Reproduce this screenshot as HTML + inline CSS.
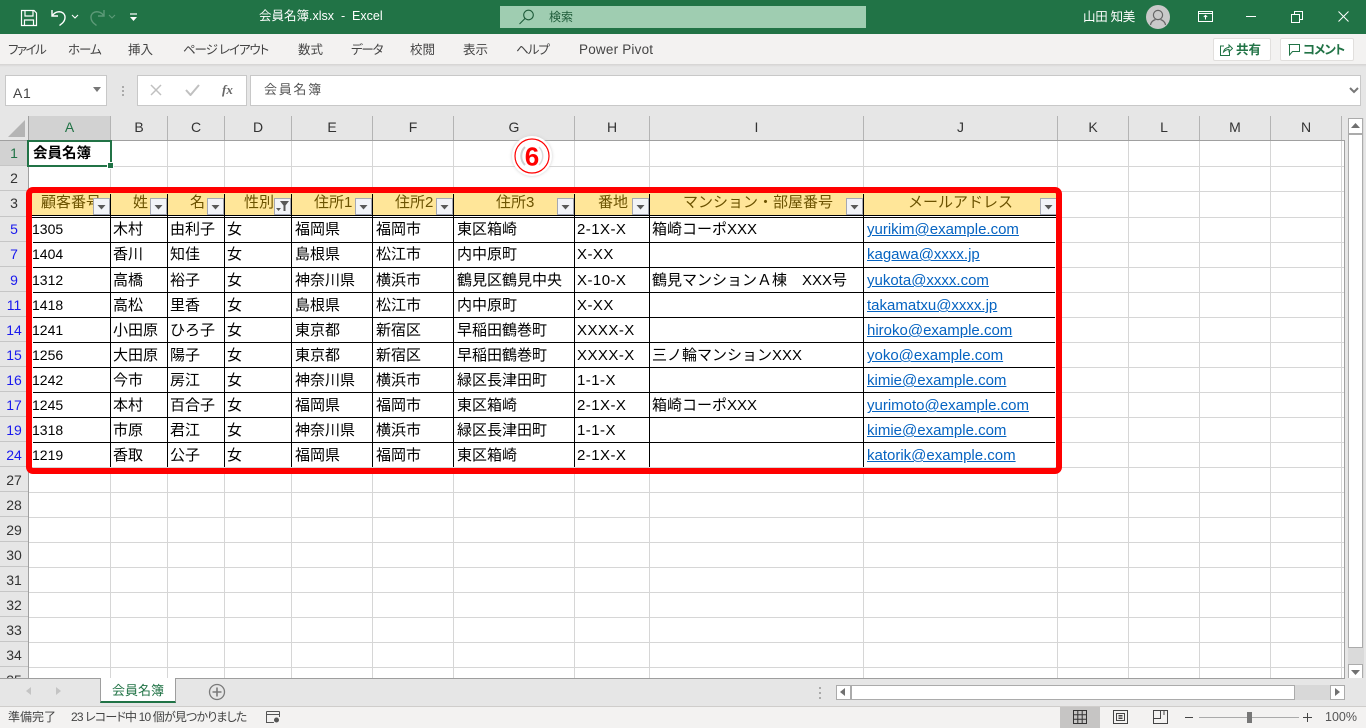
<!DOCTYPE html>
<html lang="ja"><head><meta charset="utf-8"><title>会員名簿.xlsx - Excel</title>
<style>
html,body{margin:0;padding:0;width:1366px;height:728px;overflow:hidden;background:#fff}
body{position:relative;font-family:"Liberation Sans","Noto Sans CJK JP",sans-serif;color:#000}
div,span,i,a,svg{position:absolute;display:block;font-style:normal;white-space:pre}
.box{box-sizing:border-box}
.t{font-size:12.5px;line-height:18px;color:#444;font-feature-settings:"palt"}
.ch{top:115px;height:25px;line-height:25px;text-align:center;font-size:14px;color:#333}
.cs{top:116px;width:1px;height:24px;background:#b4b4b4}
.rh{left:0;width:28px;height:25px;line-height:25px;text-align:center;font-size:14px;color:#333}
.rb{color:#1a1aee}
.rl{left:0;width:28px;height:1px;background:#c6c6c6}
.gv{top:141px;width:1px;height:537px;background:#d6d6d6}
.gh{left:29px;width:1315px;height:1px;background:#d6d6d6}
.bv{top:194px;width:1px;height:273px;background:#000}
.bh{left:33px;width:1022px;height:1px;background:#000}
.r{left:0;width:1100px;height:25px;line-height:25px;font-size:15px}
.r i{top:0}
.c1{left:32px;font-size:14px}.c2{left:113px}.c3{left:170px}.c4{left:227px}.c5{left:295px}.c6{left:376px}.c7{left:457px}.c8{left:577px;letter-spacing:.45px}.c9{left:652px}
.r a{left:867px;top:0;color:#0563c1;text-decoration:underline}
.h{top:191px;height:24px;line-height:24px;font-size:15px;color:#6b5200}
.f{top:198px;width:17px;height:17px}
</style></head><body>

<!-- title bar -->
<div style="left:0;top:0;width:1366px;height:34px;background:#217346"></div>
<svg style="left:20px;top:9px" width="18" height="18" viewBox="0 0 18 18" fill="none" stroke="#fff" stroke-width="1.2"><path d="M1.5 1.5H14L16.5 4V16.5H1.5Z"/><path d="M5 1.5V7H13V1.5M4.5 16.5V11H13.5V16.5"/></svg>
<svg style="left:50px;top:8px" width="18" height="19" viewBox="0 0 18 19" fill="none" stroke="#fff" stroke-width="1.4"><path d="M2 2V8H8"/><path d="M2.5 7.5C5 3.5 10 2.8 13 5C16 7.5 15.5 12 12.5 15L9.5 17.5"/></svg>
<svg style="left:71px;top:14px" width="8" height="5" viewBox="0 0 8 5" fill="none" stroke="#fff" stroke-width="1.1"><path d="M1 1L4 4L7 1"/></svg>
<svg style="left:88px;top:8px" width="18" height="19" viewBox="0 0 18 19" fill="none" stroke="#5d9a78" stroke-width="1.4"><path d="M16 2V8H10"/><path d="M15.5 7.5C13 3.5 8 2.8 5 5C2 7.5 2.5 12 5.5 15L8.5 17.5"/></svg>
<svg style="left:108px;top:14px" width="8" height="5" viewBox="0 0 8 5" fill="none" stroke="#5d9a78" stroke-width="1.1"><path d="M1 1L4 4L7 1"/></svg>
<svg style="left:129px;top:13px" width="9" height="9" viewBox="0 0 9 9"><path d="M1 1H8" stroke="#fff" stroke-width="1.2"/><path d="M1 4L4.5 8L8 4Z" fill="#fff"/></svg>
<span style="left:259px;top:7px;font-size:12.5px;line-height:18px;color:#fff">会員名簿.xlsx&nbsp; -&nbsp; Excel</span>
<div style="left:500px;top:6px;width:366px;height:22px;background:#9fcdb1"></div>
<svg style="left:518px;top:9px" width="17" height="16" viewBox="0 0 17 16" fill="none" stroke="#1f5c3a" stroke-width="1.1"><circle cx="10.5" cy="6" r="4.8"/><path d="M7 9.5L1.5 15"/></svg>
<span style="left:549px;top:8px;font-size:12px;line-height:18px;color:#1f5c3a">検索</span>
<span style="left:1083px;top:8px;font-size:12.5px;line-height:18px;color:#fff;letter-spacing:-.3px">山田 知美</span>
<div style="left:1146px;top:5px;width:24px;height:24px;border-radius:50%;background:#c9c9c9"></div>
<svg style="left:1146px;top:5px" width="24" height="24" viewBox="0 0 24 24" fill="none" stroke="#666" stroke-width="1.2"><circle cx="12" cy="10" r="4.6"/><path d="M4.5 20C5 16.5 8 15 9.5 14.5M19.5 20C19 16.5 16 15 14.5 14.5"/></svg>
<svg style="left:1198px;top:10px" width="15" height="13" viewBox="0 0 15 13" fill="none" stroke="#fff"><path d="M.5 1.5H14.5V11.5H.5ZM.5 3.5H14.5"/><path d="M7.5 9.5V5.5M5.8 7L7.5 5.3L9.2 7"/></svg>
<div style="left:1246px;top:16px;width:10px;height:1px;background:#fff"></div>
<svg style="left:1291px;top:11px" width="12" height="12" viewBox="0 0 12 12" fill="none" stroke="#fff"><path d="M.5 3.5H8.5V11.5H.5ZM3.5 3.5V.5H11.5V8.5H8.5"/></svg>
<svg style="left:1338px;top:11px" width="11" height="11" viewBox="0 0 11 11" fill="none" stroke="#fff"><path d="M.5.5L10.5 10.5M10.5.5L.5 10.5"/></svg>

<!-- ribbon tabs -->
<div style="left:0;top:34px;width:1366px;height:30px;background:#f3f2f1"></div>
<div style="left:0;top:64px;width:1366px;height:51px;background:#e6e6e6"></div>
<div style="left:0;top:64px;width:1366px;height:3px;background:linear-gradient(#d4d3d2,#e6e6e6)"></div>
<span class="t" style="left:8px;top:41px;letter-spacing:-1.5px">ファイル</span>
<span class="t" style="left:68px;top:41px;letter-spacing:-1px">ホーム</span>
<span class="t" style="left:128px;top:41px">挿入</span>
<span class="t" style="left:183px;top:41px;letter-spacing:-1.1px">ページ レイアウト</span>
<span class="t" style="left:298px;top:41px">数式</span>
<span class="t" style="left:351px;top:41px;letter-spacing:-1.2px">データ</span>
<span class="t" style="left:410px;top:41px">校閲</span>
<span class="t" style="left:463px;top:41px">表示</span>
<span class="t" style="left:516px;top:41px;letter-spacing:-1px">ヘルプ</span>
<span class="t" style="left:579px;top:41px;font-size:13.5px;letter-spacing:.2px">Power Pivot</span>
<div class="box" style="left:1213px;top:38px;width:58px;height:23px;background:#fff;border:1px solid #e1dfdd;border-radius:2px"></div>
<svg style="left:1219px;top:42px" width="14" height="15" viewBox="0 0 14 15" fill="none" stroke="#217346"><path d="M5 4H1.5V13.5H10.5V9"/><path d="M4.5 10C5 7 7.5 5.5 10 5.5V3L13.5 6.5L10 9.5V7.5C8 7.5 6 8.5 4.5 10Z"/></svg>
<span style="left:1236px;top:41px;font-size:12.5px;line-height:18px;font-weight:bold;color:#217346">共有</span>
<div class="box" style="left:1280px;top:38px;width:74px;height:23px;background:#fff;border:1px solid #e1dfdd;border-radius:2px"></div>
<svg style="left:1288px;top:44px" width="12" height="12" viewBox="0 0 12 12" fill="none" stroke="#217346"><path d="M.5.5H11.5V7.5H4.5L1.5 11V.5"/></svg>
<span style="left:1303px;top:41px;font-size:12.5px;line-height:18px;font-weight:bold;color:#217346;font-feature-settings:'palt';letter-spacing:-1px">コメント</span>

<!-- formula bar -->
<div class="box" style="left:5px;top:75px;width:102px;height:31px;background:#fff;border:1px solid #c8c8c8"></div>
<span style="left:13px;top:84px;font-size:14px;line-height:18px;color:#444;letter-spacing:.6px">A1</span>
<svg style="left:92px;top:87px" width="10" height="6"><path d="M1 0H9L5 5Z" fill="#777"/></svg>
<div style="left:122px;top:86px;width:2px;height:2px;background:#aaa"></div>
<div style="left:122px;top:90px;width:2px;height:2px;background:#aaa"></div>
<div style="left:122px;top:94px;width:2px;height:2px;background:#aaa"></div>
<div class="box" style="left:137px;top:75px;width:110px;height:31px;background:#fff;border:1px solid #c8c8c8"></div>
<svg style="left:150px;top:84px" width="12" height="12" fill="none" stroke="#c0c0c0" stroke-width="1.5"><path d="M1 1L11 11M11 1L1 11"/></svg>
<svg style="left:185px;top:84px" width="15" height="12" fill="none" stroke="#c0c0c0" stroke-width="2"><path d="M1 6L5.5 11L14 1"/></svg>
<span style="left:222px;top:81px;font-family:'Liberation Serif',serif;font-style:italic;font-weight:bold;font-size:13px;line-height:18px;color:#666">fx</span>
<div class="box" style="left:250px;top:75px;width:1111px;height:31px;background:#fff;border:1px solid #c8c8c8"></div>
<span style="left:264px;top:80px;font-size:13px;line-height:20px;color:#555;letter-spacing:1.7px">会員名簿</span>
<svg style="left:1349px;top:87px" width="10" height="7" fill="none" stroke="#777" stroke-width="2"><path d="M1 1L5 5L9 1"/></svg>

<!-- headers background -->
<div style="left:0;top:115px;width:1345px;height:26px;background:#e6e6e6"></div>
<div style="left:0;top:141px;width:28px;height:537px;background:#e6e6e6"></div>
<div style="left:28px;top:116px;width:83px;height:24px;background:#d2d2d2"></div>
<div style="left:0;top:141px;width:28px;height:25px;background:#d2d2d2"></div>
<svg style="left:8px;top:120px" width="18" height="18"><path d="M17 0V17H0Z" fill="#b4b4b4"/></svg>
<div style="left:0;top:140px;width:1345px;height:1px;background:#a0a0a0"></div>
<div style="left:28px;top:116px;width:1px;height:562px;background:#a0a0a0"></div>

<div class="cs" style="left:110px"></div><div class="cs" style="left:167px"></div><div class="cs" style="left:224px"></div><div class="cs" style="left:291px"></div><div class="cs" style="left:372px"></div><div class="cs" style="left:453px"></div><div class="cs" style="left:574px"></div><div class="cs" style="left:649px"></div><div class="cs" style="left:863px"></div><div class="cs" style="left:1057px"></div><div class="cs" style="left:1128px"></div><div class="cs" style="left:1199px"></div><div class="cs" style="left:1270px"></div><div class="cs" style="left:1341px"></div>

<div class="ch" style="left:29px;width:81px;color:#217346">A</div>
<div class="ch" style="left:111px;width:56px">B</div>
<div class="ch" style="left:168px;width:56px">C</div>
<div class="ch" style="left:225px;width:66px">D</div>
<div class="ch" style="left:292px;width:80px">E</div>
<div class="ch" style="left:373px;width:80px">F</div>
<div class="ch" style="left:454px;width:120px">G</div>
<div class="ch" style="left:575px;width:74px">H</div>
<div class="ch" style="left:650px;width:213px">I</div>
<div class="ch" style="left:864px;width:193px">J</div>
<div class="ch" style="left:1058px;width:70px">K</div>
<div class="ch" style="left:1129px;width:70px">L</div>
<div class="ch" style="left:1200px;width:70px">M</div>
<div class="ch" style="left:1271px;width:70px">N</div>

<!-- row header separators -->
<div class="rl" style="top:165px"></div><div class="rl" style="top:190px"></div><div class="rl" style="top:216px"></div><div class="rl" style="top:241px"></div><div class="rl" style="top:266px"></div><div class="rl" style="top:291px"></div><div class="rl" style="top:316px"></div><div class="rl" style="top:341px"></div><div class="rl" style="top:366px"></div><div class="rl" style="top:391px"></div><div class="rl" style="top:416px"></div><div class="rl" style="top:441px"></div><div class="rl" style="top:466px"></div><div class="rl" style="top:491px"></div><div class="rl" style="top:516px"></div><div class="rl" style="top:541px"></div><div class="rl" style="top:566px"></div><div class="rl" style="top:591px"></div><div class="rl" style="top:616px"></div><div class="rl" style="top:641px"></div><div class="rl" style="top:666px"></div>

<div class="rh" style="top:141px;color:#217346">1</div>
<div class="rh" style="top:166px">2</div>
<div class="rh" style="top:191px">3</div>
<div class="rh rb" style="top:217px">5</div>
<div class="rh rb" style="top:242px">7</div>
<div class="rh rb" style="top:268px">9</div>
<div class="rh rb" style="top:293px">11</div>
<div class="rh rb" style="top:318px">14</div>
<div class="rh rb" style="top:343px">15</div>
<div class="rh rb" style="top:368px">16</div>
<div class="rh rb" style="top:393px">17</div>
<div class="rh rb" style="top:418px">19</div>
<div class="rh rb" style="top:443px">24</div>
<div class="rh" style="top:468px">27</div>
<div class="rh" style="top:493px">28</div>
<div class="rh" style="top:518px">29</div>
<div class="rh" style="top:543px">30</div>
<div class="rh" style="top:568px">31</div>
<div class="rh" style="top:593px">32</div>
<div class="rh" style="top:618px">33</div>
<div class="rh" style="top:643px">34</div>
<div class="rh" style="top:668px;height:10px;overflow:hidden">35</div>

<!-- gridlines -->
<div class="gv" style="left:110px"></div><div class="gv" style="left:167px"></div><div class="gv" style="left:224px"></div><div class="gv" style="left:291px"></div><div class="gv" style="left:372px"></div><div class="gv" style="left:453px"></div><div class="gv" style="left:574px"></div><div class="gv" style="left:649px"></div><div class="gv" style="left:863px"></div><div class="gv" style="left:1057px"></div><div class="gv" style="left:1128px"></div><div class="gv" style="left:1199px"></div><div class="gv" style="left:1270px"></div><div class="gv" style="left:1341px"></div>
<div class="gh" style="top:166px"></div><div class="gh" style="top:191px"></div><div class="gh" style="top:217px"></div><div class="gh" style="top:242px"></div><div class="gh" style="top:267px"></div><div class="gh" style="top:292px"></div><div class="gh" style="top:317px"></div><div class="gh" style="top:342px"></div><div class="gh" style="top:367px"></div><div class="gh" style="top:392px"></div><div class="gh" style="top:417px"></div><div class="gh" style="top:442px"></div><div class="gh" style="top:467px"></div><div class="gh" style="top:492px"></div><div class="gh" style="top:517px"></div><div class="gh" style="top:542px"></div><div class="gh" style="top:567px"></div><div class="gh" style="top:592px"></div><div class="gh" style="top:617px"></div><div class="gh" style="top:642px"></div><div class="gh" style="top:667px"></div>
<div style="left:1344px;top:141px;width:1px;height:537px;background:#a0a0a0"></div>

<!-- table -->
<div style="left:29px;top:191px;width:1027px;height:24px;background:#ffe699"></div>
<div style="left:29px;top:216px;width:1027px;height:251px;background:#fff"></div>
<div style="left:29px;top:215px;width:1027px;height:1px;background:#000"></div>
<div style="left:29px;top:217px;width:1027px;height:1px;background:#000"></div>
<div class="bh" style="top:242px"></div><div class="bh" style="top:267px"></div><div class="bh" style="top:292px"></div><div class="bh" style="top:317px"></div><div class="bh" style="top:342px"></div><div class="bh" style="top:367px"></div><div class="bh" style="top:392px"></div><div class="bh" style="top:417px"></div><div class="bh" style="top:442px"></div>
<div class="bv" style="left:110px"></div><div class="bv" style="left:167px"></div><div class="bv" style="left:224px"></div><div class="bv" style="left:291px"></div><div class="bv" style="left:372px"></div><div class="bv" style="left:453px"></div><div class="bv" style="left:574px"></div><div class="bv" style="left:649px"></div><div class="bv" style="left:863px"></div>

<span class="h" style="left:41px">顧客番号</span>
<span class="h" style="left:133px">姓</span>
<span class="h" style="left:190px">名</span>
<span class="h" style="left:244px">性別</span>
<span class="h" style="left:314px">住所1</span>
<span class="h" style="left:395px">住所2</span>
<span class="h" style="left:496px">住所3</span>
<span class="h" style="left:598px">番地</span>
<span class="h" style="left:683px">マンション・部屋番号</span>
<span class="h" style="left:908px">メールアドレス</span>

<svg class="f" style="left:93px" viewBox="0 0 17 17"><rect x=".5" y=".5" width="16" height="16" fill="#f2f4f8" stroke="#a5a8b2"/><path d="M4.500 7H12.500L8.500 11.500Z" fill="#595959"/></svg>
<svg class="f" style="left:150px" viewBox="0 0 17 17"><rect x=".5" y=".5" width="16" height="16" fill="#f2f4f8" stroke="#a5a8b2"/><path d="M4.500 7H12.500L8.500 11.500Z" fill="#595959"/></svg>
<svg class="f" style="left:207px" viewBox="0 0 17 17"><rect x=".5" y=".5" width="16" height="16" fill="#f2f4f8" stroke="#a5a8b2"/><path d="M4.500 7H12.500L8.500 11.500Z" fill="#595959"/></svg>
<svg class="f" style="left:274px" viewBox="0 0 17 17"><rect x=".5" y=".5" width="16" height="16" fill="#f2f4f8" stroke="#a5a8b2"/><path d="M6 3H15L11.5 7.5V13H9.5V7.5Z" fill="#595959"/><path d="M2 10H7L4.5 13Z" fill="#595959"/></svg>
<svg class="f" style="left:355px" viewBox="0 0 17 17"><rect x=".5" y=".5" width="16" height="16" fill="#f2f4f8" stroke="#a5a8b2"/><path d="M4.500 7H12.500L8.500 11.500Z" fill="#595959"/></svg>
<svg class="f" style="left:436px" viewBox="0 0 17 17"><rect x=".5" y=".5" width="16" height="16" fill="#f2f4f8" stroke="#a5a8b2"/><path d="M4.500 7H12.500L8.500 11.500Z" fill="#595959"/></svg>
<svg class="f" style="left:557px" viewBox="0 0 17 17"><rect x=".5" y=".5" width="16" height="16" fill="#f2f4f8" stroke="#a5a8b2"/><path d="M4.500 7H12.500L8.500 11.500Z" fill="#595959"/></svg>
<svg class="f" style="left:632px" viewBox="0 0 17 17"><rect x=".5" y=".5" width="16" height="16" fill="#f2f4f8" stroke="#a5a8b2"/><path d="M4.500 7H12.500L8.500 11.500Z" fill="#595959"/></svg>
<svg class="f" style="left:846px" viewBox="0 0 17 17"><rect x=".5" y=".5" width="16" height="16" fill="#f2f4f8" stroke="#a5a8b2"/><path d="M4.500 7H12.500L8.500 11.500Z" fill="#595959"/></svg>
<svg class="f" style="left:1040px" viewBox="0 0 17 17"><rect x=".5" y=".5" width="16" height="16" fill="#f2f4f8" stroke="#a5a8b2"/><path d="M4.500 7H12.500L8.500 11.500Z" fill="#595959"/></svg>

<div class="r" style="top:217px"><i class="c1">1305</i><i class="c2">木村</i><i class="c3">由利子</i><i class="c4">女</i><i class="c5">福岡県</i><i class="c6">福岡市</i><i class="c7">東区箱崎</i><i class="c8">2-1X-X</i><i class="c9">箱崎コーポXXX</i><a>yurikim@example.com</a></div>
<div class="r" style="top:242px"><i class="c1">1404</i><i class="c2">香川</i><i class="c3">知佳</i><i class="c4">女</i><i class="c5">島根県</i><i class="c6">松江市</i><i class="c7">内中原町</i><i class="c8">X-XX</i><a>kagawa@xxxx.jp</a></div>
<div class="r" style="top:268px"><i class="c1">1312</i><i class="c2">高橋</i><i class="c3">裕子</i><i class="c4">女</i><i class="c5">神奈川県</i><i class="c6">横浜市</i><i class="c7">鶴見区鶴見中央</i><i class="c8">X-10-X</i><i class="c9">鶴見マンションＡ棟　XXX号</i><a>yukota@xxxx.com</a></div>
<div class="r" style="top:293px"><i class="c1">1418</i><i class="c2">高松</i><i class="c3">里香</i><i class="c4">女</i><i class="c5">島根県</i><i class="c6">松江市</i><i class="c7">内中原町</i><i class="c8">X-XX</i><a>takamatxu@xxxx.jp</a></div>
<div class="r" style="top:318px"><i class="c1">1241</i><i class="c2">小田原</i><i class="c3">ひろ子</i><i class="c4">女</i><i class="c5">東京都</i><i class="c6">新宿区</i><i class="c7">早稲田鶴巻町</i><i class="c8">XXXX-X</i><a>hiroko@example.com</a></div>
<div class="r" style="top:343px"><i class="c1">1256</i><i class="c2">大田原</i><i class="c3">陽子</i><i class="c4">女</i><i class="c5">東京都</i><i class="c6">新宿区</i><i class="c7">早稲田鶴巻町</i><i class="c8">XXXX-X</i><i class="c9">三ノ輪マンションXXX</i><a>yoko@example.com</a></div>
<div class="r" style="top:368px"><i class="c1">1242</i><i class="c2">今市</i><i class="c3">房江</i><i class="c4">女</i><i class="c5">神奈川県</i><i class="c6">横浜市</i><i class="c7">緑区長津田町</i><i class="c8">1-1-X</i><a>kimie@example.com</a></div>
<div class="r" style="top:393px"><i class="c1">1245</i><i class="c2">本村</i><i class="c3">百合子</i><i class="c4">女</i><i class="c5">福岡県</i><i class="c6">福岡市</i><i class="c7">東区箱崎</i><i class="c8">2-1X-X</i><i class="c9">箱崎コーポXXX</i><a>yurimoto@example.com</a></div>
<div class="r" style="top:418px"><i class="c1">1318</i><i class="c2">市原</i><i class="c3">君江</i><i class="c4">女</i><i class="c5">神奈川県</i><i class="c6">横浜市</i><i class="c7">緑区長津田町</i><i class="c8">1-1-X</i><a>kimie@example.com</a></div>
<div class="r" style="top:443px"><i class="c1">1219</i><i class="c2">香取</i><i class="c3">公子</i><i class="c4">女</i><i class="c5">福岡県</i><i class="c6">福岡市</i><i class="c7">東区箱崎</i><i class="c8">2-1X-X</i><a>katorik@example.com</a></div>

<!-- A1 -->
<span style="left:33px;top:142px;font-size:14.5px;line-height:24px;font-weight:bold">会員名簿</span>
<div class="box" style="left:27px;top:140px;width:85px;height:27px;border:2px solid #217346"></div>
<div class="box" style="left:108px;top:163px;width:5px;height:5px;background:#217346;outline:1px solid #fff"></div>

<!-- red frame -->
<div class="box" style="left:26px;top:187px;width:1036px;height:287px;border:6.5px solid #f00;border-radius:7px"></div>

<!-- callout -->
<svg style="left:508px;top:132px" width="48" height="48" viewBox="0 0 48 48" fill="none">
<circle cx="24" cy="24" r="20" fill="#fff" style="filter:drop-shadow(0 0 1.500px #cfcfcf)"/><circle cx="24" cy="24" r="17" stroke="#f00" stroke-width="1.2"/>
<path d="M17 15C12 20 12 28 17 33" stroke="#cfcfcf" stroke-width="2"/><path d="M31 15C36 20 36 28 31 33" stroke="#dcdcdc" stroke-width="1.5"/>
<text x="24" y="33.500" text-anchor="middle" font-family="Liberation Sans" font-size="26" font-weight="bold" fill="#f00">6</text></svg>

<!-- vertical scrollbar -->
<div style="left:1345px;top:115px;width:21px;height:563px;background:#e6e6e6"></div>
<div style="left:1348px;top:118px;width:16px;height:562px;background:#dadada"></div>
<div class="box" style="left:1348px;top:118px;width:15px;height:16px;background:#fff;border:1px solid #ababab"></div>
<svg style="left:1351px;top:123px" width="9" height="6"><path d="M4.500 0L9 5H0Z" fill="#707070"/></svg>
<div class="box" style="left:1348px;top:134px;width:15px;height:514px;background:#fff;border:1px solid #ababab"></div>
<div class="box" style="left:1348px;top:664px;width:15px;height:15px;background:#fff;border:1px solid #ababab"></div>
<svg style="left:1351px;top:670px" width="9" height="6"><path d="M0 0H9L4.500 5Z" fill="#707070"/></svg>

<!-- sheet tab bar -->
<div style="left:0;top:678px;width:1366px;height:29px;background:#e6e6e6"></div>
<div style="left:0;top:678px;width:1345px;height:1px;background:#9e9e9e"></div>
<svg style="left:26px;top:687px" width="6" height="9"><path d="M5 0V8L0 4Z" fill="#c4c4c4"/></svg>
<svg style="left:56px;top:687px" width="6" height="9"><path d="M0 0V8L5 4Z" fill="#c4c4c4"/></svg>
<div class="box" style="left:100px;top:678px;width:76px;height:25px;background:#fff;border:1px solid #9e9e9e;border-bottom:2px solid #217346"></div>
<div style="left:101px;top:678px;width:74px;height:1px;background:#fff"></div>
<span style="left:112px;top:682px;font-size:13px;line-height:18px;color:#217346">会員名簿</span>
<svg style="left:208px;top:683px" width="18" height="18" fill="none" stroke="#7a7a7a"><circle cx="9" cy="9" r="7.500" stroke-width="1.300"/><path d="M9 4.500V13.500M4.500 9H13.500" stroke-width="1.600"/></svg>
<div style="left:819px;top:687px;width:2px;height:2px;background:#aaa"></div><div style="left:819px;top:692px;width:2px;height:2px;background:#aaa"></div><div style="left:819px;top:697px;width:2px;height:2px;background:#aaa"></div>
<div style="left:836px;top:685px;width:509px;height:15px;background:#d8d8d8"></div>
<div class="box" style="left:836px;top:685px;width:15px;height:15px;background:#fff;border:1px solid #ababab"></div>
<svg style="left:840px;top:688px" width="6" height="9"><path d="M5 0V8L0 4Z" fill="#707070"/></svg>
<div class="box" style="left:851px;top:685px;width:444px;height:15px;background:#fff;border:1px solid #ababab"></div>
<div class="box" style="left:1330px;top:685px;width:15px;height:15px;background:#fff;border:1px solid #ababab"></div>
<svg style="left:1335px;top:688px" width="6" height="9"><path d="M0 0V8L5 4Z" fill="#707070"/></svg>

<!-- status bar -->
<div style="left:0;top:706px;width:1366px;height:22px;background:#f3f2f1"></div>
<div style="left:0;top:706px;width:1366px;height:1px;background:#cfcdcb"></div>
<span class="t" style="left:8px;top:708px;font-size:12px">準備完了</span>
<span class="t" style="left:71px;top:708px;font-size:12px;letter-spacing:-.85px">23 レコード中 10 個が見つかりました</span>
<svg style="left:266px;top:711px" width="15" height="13" fill="none" stroke="#555"><path d="M.5.500H13.500M.5 3.500H13.500M.5.500V11.500H8M13.500.500V6"/><circle cx="10.500" cy="9" r="3" fill="#555" stroke="#f3f2f1"/></svg>
<div style="left:1060px;top:707px;width:40px;height:21px;background:#c6c5c4"></div>
<svg style="left:1073px;top:710px" width="14" height="14" fill="none" stroke="#333"><path d="M.5.500H13.500V13.500H.5ZM4.800.500V13.500M9.200.500V13.500M.5 4.800H13.500M.5 9.200H13.500"/></svg>
<svg style="left:1113px;top:710px" width="15" height="14" fill="none" stroke="#444"><path d="M.5.500H14.500V13.500H.5ZM3.500 3.500H11.500V10.500H3.500ZM5.500 5.500H9.500M5.500 7H9.500M5.500 8.500H9.500"/></svg>
<svg style="left:1153px;top:710px" width="15" height="14" fill="none" stroke="#444"><path d="M.5.500H14.500V13.500H.5ZM.5 8.500H7.500V.500M11 .500V5"/></svg>
<div style="left:1185px;top:717px;width:8px;height:1px;background:#444"></div>
<div style="left:1199px;top:717px;width:100px;height:1px;background:#aaa"></div>
<div style="left:1247px;top:712px;width:5px;height:11px;background:#777"></div>
<div style="left:1303px;top:717px;width:9px;height:1px;background:#444"></div>
<div style="left:1307px;top:713px;width:1px;height:9px;background:#444"></div>
<span style="left:1325px;top:708px;font-size:12.5px;line-height:18px;color:#555">100%</span>
</body></html>
